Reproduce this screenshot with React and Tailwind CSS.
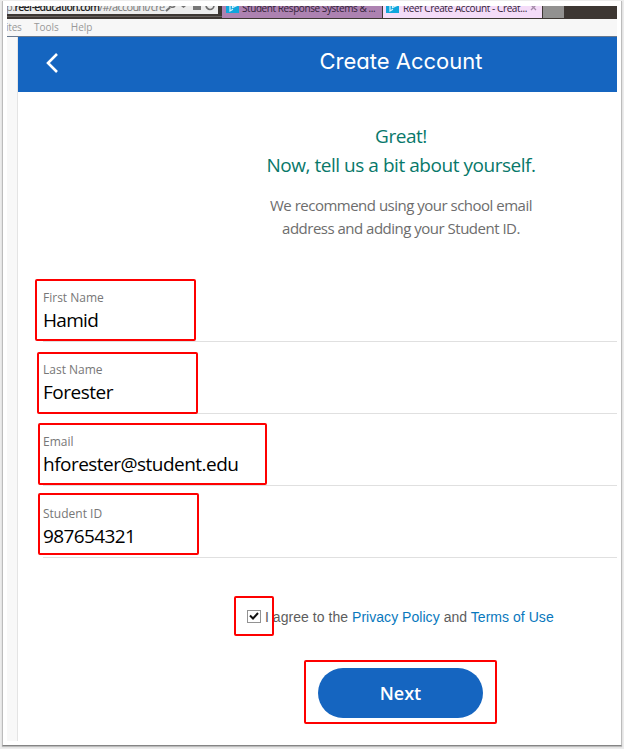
const fields = [
  { label: "First Name", value: "Hamid", spacing: "tracking-[-0.7px]", box: "left-[17px] top-[9px] w-[161px] h-[62px]" },
  { label: "Last Name", value: "Forester", spacing: "tracking-[-0.5px]", box: "left-[19px] top-[10px] w-[161px] h-[62px]" },
  { label: "Email", value: "hforester@student.edu", spacing: "tracking-[-0.52px]", box: "left-[20px] top-[9px] w-[229px] h-[62px]" },
  { label: "Student ID", value: "987654321", spacing: "tracking-[-0.6px]", box: "left-[20px] top-[7px] w-[161px] h-[62px]" },
];

function Highlight({ className }) {
  return <div className={`absolute border-2 border-[#fe0000] rounded-[2px] ${className}`} />;
}

function ReefIcon() {
  return (
    <svg className="shrink-0" width="13" height="13" viewBox="0 0 13 13">
      <rect width="13" height="13" fill="#10a6dc" />
      <path d="M4 2v9l3-1.8M6.5 3v4.5L11 5.5 6.5 3" fill="none" stroke="#d9f3fb" strokeWidth="1.2" />
    </svg>
  );
}

function Browser() {
  return (
    <div className="flex h-[13px] shrink-0 overflow-hidden bg-[#3d3733]">
      <div className="flex h-[13px] w-[215px] shrink-0 flex-col">
        <div className="flex h-[8px] w-[211px] overflow-hidden bg-[#ececec]">
          <div className="-mt-[7px] w-[156px] shrink-0 whitespace-nowrap text-[11px] leading-[16px] text-[#777]">
            <span className="-ml-[1px] inline-block tracking-[-0.55px]">
              p.<span className="text-[10.5px] font-semibold tracking-[-0.8px] text-[#222]">reef-education.com</span>
              <span className="tracking-[-0.75px]">/#/account/cre</span>
            </span>
          </div>
          <svg className="shrink-0" width="55" height="8" viewBox="0 0 55 8" fill="none" stroke="#707070">
            <path d="M3 5 L7 1.500" strokeWidth="2" />
            <path d="M6 -1a3.5 3.5 0 0 0 6 1" strokeWidth="1.6" />
            <path d="M18 0h5l-2.500 2z" fill="#707070" stroke="none" />
            <path d="M30 0h8v4h-8z" fill="#777" stroke="none" />
            <path d="M43 -1a4 4.500 0 0 0 8 0" strokeWidth="1.7" />
          </svg>
        </div>
        <div className="mt-[2px] h-px bg-[#67615e]" />
      </div>
      <div className="flex h-[12px] w-[160px] shrink-0 overflow-hidden bg-[#ad82b1] pl-[4px]">
        <div className="-mt-[6px]"><ReefIcon /></div>
        <span className="-mt-[6px] ml-[3px] whitespace-nowrap text-[10px] leading-[16px] tracking-[-0.42px] text-[#332238]">
          Student Response Systems &amp; ...
        </span>
      </div>
      <div className="ml-[1px] flex h-[12px] w-[159px] shrink-0 overflow-hidden bg-[#f4dcf8] pl-[3px]">
        <div className="-mt-[6px]"><ReefIcon /></div>
        <span className="-mt-[6px] ml-[4px] w-[127px] shrink-0 whitespace-nowrap text-[10px] leading-[16px] tracking-[-0.4px] text-[#332238]">
          Reef Create Account - Creat...
        </span>
        <svg className="shrink-0" width="9" height="8" viewBox="0 0 9 8"><path d="M1 -1l5 5M6 -1l-5 5" stroke="#a58ca9" strokeWidth="1.3" /></svg>
      </div>
      <div className="ml-[1px] h-[12px] w-[21px] bg-[#929190]" />
    </div>
  );
}

export default function App() {
  return (
    <div className="h-[749px] w-[624px] overflow-hidden bg-[#ececec] pl-[2px] pt-[1px] font-['Open_Sans','Noto_Sans',sans-serif]">
      <div className="h-[745px] w-[620px] border-r border-b border-l border-[#bcbcbc] border-b-[#858585] bg-white pl-[4px] pt-[5px] shadow-[0_1px_1px_#bbb]">
        <div className="flex h-[735px] w-[610px] flex-col overflow-hidden">
          <Browser />
          <div className="flex h-[18px] shrink-0 items-center gap-[12px] border-b border-[#68798f] bg-[#f7f7f7] text-[10px] leading-[17px] text-[#999]">
            <span className="-ml-px w-[16px] tracking-[-0.2px]">ites</span>
            <span>Tools</span>
            <span>Help</span>
          </div>
          <div className="flex min-h-0 flex-1">
            <div className="w-[11px] shrink-0 border-r border-[#e4e4e4] bg-[#f8f8f8]" />
            <main className="flex w-[766px] shrink-0 flex-col">
              <header className="flex h-[55px] w-full shrink-0 items-center bg-[#1565c0]">
                <svg className="-mt-[3px] ml-[27px]" width="14" height="22" viewBox="0 0 14 22">
                  <path d="M12 2L3 11l9 9" fill="none" stroke="white" strokeWidth="2.6" />
                </svg>
                <h1 className="mr-[41px] flex-1 pb-[7px] text-center font-['Inter'] text-[22px] leading-[28px] text-white [font-feature-settings:'cv11']">
                  Create Account
                </h1>
              </header>
              <section className="h-[178px] shrink-0 pt-[30px] text-center">
                <p className="text-[19px] leading-[29px] tracking-[-0.46px] text-[#08786a]">
                  Great!<br />Now, tell us a bit about yourself.
                </p>
                <p className="mt-[14px] text-[15px] leading-[23px] tracking-[-0.5px] text-[#6d6d6d]">
                  We recommend using your school email<br />address and adding your Student ID.
                </p>
              </section>
              {fields.map((f) => (
                <div key={f.label} className="relative h-[72px] shrink-0 pl-[25px]">
                  <div className="h-[72px] border-b border-[#e0e0e0] pt-[20px]">
                    <div className="text-[12px] leading-[16px] text-[#777]">{f.label}</div>
                    <div className={`mt-[2px] text-[19px] leading-[24px] text-black ${f.spacing}`}>{f.value}</div>
                  </div>
                  <Highlight className={f.box} />
                </div>
              ))}
              <div className="mt-[48px] flex h-[20px] items-center pl-[229px] font-['Liberation_Sans',sans-serif] text-[14px] text-[#5d5d5d]">
                <div className="relative mr-[4px] h-[13px] w-[14px] shrink-0 border border-[#929292] bg-white">
                  <svg width="12" height="11" viewBox="0 0 12 11">
                    <path d="M2 4.500l3 3L10 2" fill="none" stroke="#111" strokeWidth="2" />
                  </svg>
                  <Highlight className="-left-[14px] -top-[15px] h-[40px] w-[40px]" />
                </div>
                <span className="whitespace-nowrap pt-[2px] tracking-[0.04px]">
                  I agree to the <a className="text-[#0878bd]">Privacy Policy</a> and <a className="text-[#0878bd]">Terms of Use</a>
                </span>
              </div>
              <div className="relative mt-[42px] ml-[300px] w-[165px]">
                <button className="h-[50px] w-[165px] rounded-full bg-[#1565c0] text-[18px] font-semibold text-white">Next</button>
                <Highlight className="-left-[14px] -top-[8px] h-[64px] w-[193px]" />
              </div>
            </main>
          </div>
        </div>
      </div>
    </div>
  );
}
